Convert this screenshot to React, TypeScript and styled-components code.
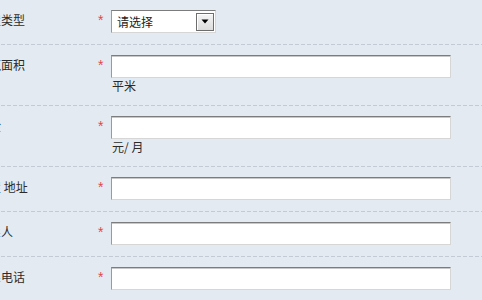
import React from "react";
import styled, { createGlobalStyle } from "styled-components";

const Global = createGlobalStyle`
  html, body {
    margin: 0;
    padding: 0;
    background: #e4eaf1;
    overflow: hidden;
  }
  body {
    font-family: "Noto Sans CJK SC", "Noto Sans", sans-serif;
    font-size: 12px;
    color: #2b2b2b;
  }
`;

const Form = styled.div`
  margin-left: -23px;
  width: 540px;
`;

const Row = styled.div`
  display: grid;
  grid-template-columns: 117px 17px 1fr;
  align-items: start;
  padding: 10px 0 12px;
  background-image: linear-gradient(to right, #c3cad3 0 4px, transparent 4px 6px);
  background-size: 6px 1px;
  background-repeat: repeat-x;
  background-position: left bottom;
`;

const Label = styled.div`
  line-height: 19px;
  font-size: 12px;
  color: #2b2b2b;
  white-space: nowrap;
`;

const Required = styled.span`
  padding-left: 4px;
  line-height: 21px;
  font-family: "Liberation Sans", sans-serif;
  font-size: 14px;
  color: #e0484c;
`;

const Field = styled.div`
  display: flex;
  flex-direction: column;
  align-items: flex-start;
`;

const TextInput = styled.div`
  box-sizing: border-box;
  width: 340px;
  height: 23px;
  background: #fff;
  border-top: 1px solid #7c7c7c;
  border-left: 1px solid #9a9a9a;
  border-right: 1px solid #d6d6d6;
  border-bottom: 1px solid #d6d6d6;
  box-shadow: inset 0 1px 0 #c8c8c8;
`;

const Unit = styled.div`
  line-height: 16px;
  font-size: 12px;
  color: #2b2b2b;
  padding-left: 1px;
  white-space: pre;
`;

const Select = styled.div`
  box-sizing: border-box;
  width: 105px;
  height: 23px;
  display: flex;
  align-items: center;
  justify-content: space-between;
  background: #fff;
  border-top: 1px solid #7c7c7c;
  border-left: 1px solid #9a9a9a;
  border-right: 1px solid #d6d6d6;
  border-bottom: 1px solid #d6d6d6;
  padding: 0 1px 0 5px;
  font-size: 12px;
  color: #222;
`;

const DropButton = styled.span`
  box-sizing: border-box;
  width: 18px;
  height: 18px;
  display: flex;
  align-items: center;
  justify-content: center;
  border: 1px solid #6d6d6d;
  background: linear-gradient(#f4f4f4, #dcdcdc);
  box-shadow: inset 1px 1px 0 #fff;
`;

type RowData = { label: string; unit?: string; select?: boolean };

const rows: RowData[] = [
  { label: "房屋类型", select: true },
  { label: "建筑面积", unit: "平米" },
  { label: "租金", unit: "元/ 月" },
  { label: "房屋 地址" },
  { label: "联系人" },
  { label: "联系电话" },
];

export default function App() {
  return (
    <>
      <Global />
      <Form>
        {rows.map((r) => (
          <Row key={r.label}>
            <Label>{r.label}</Label>
            <Required>*</Required>
            <Field>
              {r.select ? (
                <Select>
                  <span>请选择</span>
                  <DropButton>
                    <svg width="8" height="5" viewBox="0 0 8 5">
                      <path d="M0.5 0.5 H7.5 L4 4.5 Z" fill="#000" />
                    </svg>
                  </DropButton>
                </Select>
              ) : (
                <TextInput />
              )}
              {r.unit && <Unit>{r.unit}</Unit>}
            </Field>
          </Row>
        ))}
      </Form>
    </>
  );
}
